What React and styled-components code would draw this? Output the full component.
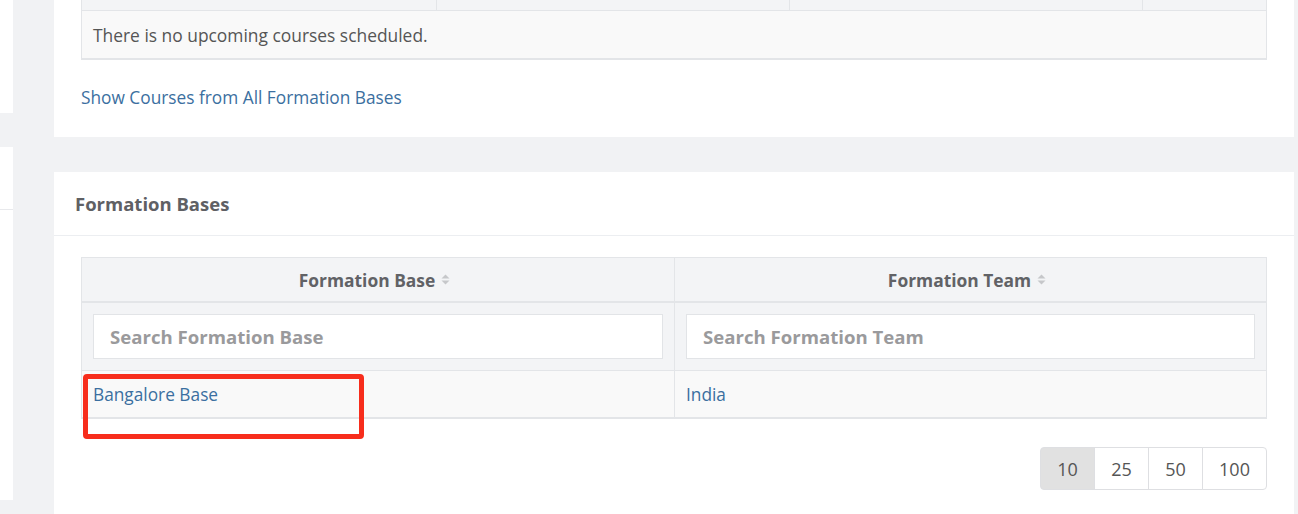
import React from 'react'
import styled, { createGlobalStyle } from 'styled-components'

const GlobalStyle = createGlobalStyle`
    html, body {
        margin: 0;
        padding: 0;
        background: #f1f2f4;
        font-family: "Open Sans", "Liberation Sans", sans-serif;
    }
`

const Page = styled.div`
    display: flex;
    height: 514px;
    overflow: hidden;
    background: #f1f2f4;
`

const Sidebar = styled.div`
    width: 13px;
    display: flex;
    flex-direction: column;
    gap: 34px;
`

const SideBlock = styled.div`
    background: #fff;
    height: ${props => props.h}px;
`

const SideItem = styled.div`
    height: 62px;
    border-bottom: 1px solid #e8e9ec;
`

const Main = styled.div`
    margin-left: 41px;
    width: 1240px;
    display: flex;
    flex-direction: column;
    gap: 35px;
`

const Card = styled.div`
    background: #fff;
    ${props => props.grow && 'flex: 1;'}
`

const CardBody = styled.div`
    padding: ${props => props.pad || '0 27px 28px'};
`

const CardHead = styled.div`
    height: 63px;
    display: flex;
    align-items: center;
    padding: 0 21px;
    border-bottom: 1px solid #eceef1;
    font-size: 18.5px;
    font-weight: 700;
    color: #5f6064;
`

const Grid = styled.div`
    display: grid;
    grid-template-columns: ${props => props.cols};
    border: 1px solid #e3e5e8;
    border-top: ${props => props.noTop ? 'none' : '1px solid #e3e5e8'};
    border-bottom-width: 2px;
`

const Cell = styled.div`
    position: relative;
    background: ${props => props.bg || '#f9f9f9'};
    border-left: ${props => props.first ? 'none' : '1px solid #e3e5e8'};
    border-bottom: ${props => props.bb || 'none'};
    height: ${props => props.h}px;
    padding: ${props => props.pad || '0 11px'};
    display: flex;
    align-items: center;
    justify-content: ${props => props.center ? 'center' : 'flex-start'};
    box-sizing: border-box;
    font-size: 17.4px;
    color: #555;
`

const Span = styled(Cell)`
    grid-column: 1 / -1;
`

const HeadText = styled.span`
    font-weight: 700;
    color: #616266;
    display: inline-flex;
    align-items: center;
    gap: 6px;
`

const Link = styled.a`
    color: #3b6fa0;
    font-size: 17.3px;
    text-decoration: none;
    cursor: pointer;
`

const ShowLink = styled(Link)`
    display: block;
    margin-top: 27px;
    line-height: 22px;
`

const Search = styled.input`
    width: 100%;
    height: 45px;
    box-sizing: border-box;
    border: 1px solid #e2e4e7;
    background: #fff;
    padding: 0 16px;
    font-family: inherit;
    font-size: 18.6px;
    font-weight: 700;
    outline: none;
    &::placeholder {
        color: #9a9a9c;
    }
`

const Highlight = styled.div`
    position: absolute;
    left: 1px;
    top: 3px;
    width: 281px;
    height: 65px;
    box-sizing: border-box;
    border: 5px solid #f72d1c;
    border-radius: 4px;
    z-index: 2;
`

const Pager = styled.div`
    display: flex;
    justify-content: flex-end;
    margin-top: 28px;
`

const PageBtn = styled.div`
    height: 43px;
    width: ${props => props.w}px;
    box-sizing: border-box;
    display: flex;
    align-items: center;
    justify-content: center;
    border: 1px solid #dedfe2;
    margin-left: -1px;
    font-size: 18px;
    color: #555;
    background: ${props => props.active ? '#e1e1e1' : '#fff'};
    &:first-child {
        border-radius: 4px 0 0 4px;
    }
    &:last-child {
        border-radius: 0 4px 4px 0;
    }
`

const SortIcon = () => (
    <svg width="9" height="13" viewBox="0 0 9 13">
        <path d="M0.5 5.5 L4.5 1.5 L8.5 5.5 Z" fill="#c6c7ca" />
        <path d="M0.5 7.5 L4.5 11.5 L8.5 7.5 Z" fill="#c6c7ca" />
    </svg>
)

const pages = [
    { n: '10', w: 55, active: true },
    { n: '25', w: 55 },
    { n: '50', w: 55 },
    { n: '100', w: 65 },
]

const App = () => (
    <>
        <GlobalStyle />
        <Page>
            <Sidebar>
                <SideBlock h={113} />
                <SideBlock h={353}><SideItem /></SideBlock>
            </Sidebar>
            <Main>
                <Card>
                    <CardBody>
                        <Grid cols="354px 353px 353px 1fr" noTop>
                            {[0, 1, 2, 3].map(i => (
                                <Cell key={i} first={i === 0} h={11} bg="#f3f4f6" bb="1px solid #e3e5e8" />
                            ))}
                            <Span first h={47} pad="0 11px">There is no upcoming courses scheduled.</Span>
                        </Grid>
                        <ShowLink>Show Courses from All Formation Bases</ShowLink>
                    </CardBody>
                </Card>
                <Card grow>
                    <CardHead>Formation Bases</CardHead>
                    <CardBody pad="21px 27px 0">
                        <Grid cols="1fr 1fr">
                            <Cell first center h={45} pad="0 18px 0 11px" bg="#f3f4f6" bb="2px solid #e3e5e8">
                                <HeadText>Formation Base <SortIcon /></HeadText>
                            </Cell>
                            <Cell center h={45} pad="0 18px 0 11px" bg="#f3f4f6" bb="2px solid #e3e5e8">
                                <HeadText>Formation Team <SortIcon /></HeadText>
                            </Cell>
                            <Cell first h={68} bg="#f3f4f6" bb="1px solid #e3e5e8">
                                <Search placeholder="Search Formation Base" />
                            </Cell>
                            <Cell h={68} bg="#f3f4f6" bb="1px solid #e3e5e8">
                                <Search placeholder="Search Formation Team" />
                            </Cell>
                            <Cell first h={46}>
                                <Link>Bangalore Base</Link>
                                <Highlight />
                            </Cell>
                            <Cell h={46}>
                                <Link>India</Link>
                            </Cell>
                        </Grid>
                        <Pager>
                            {pages.map(p => (
                                <PageBtn key={p.n} w={p.w} active={p.active}>{p.n}</PageBtn>
                            ))}
                        </Pager>
                    </CardBody>
                </Card>
            </Main>
        </Page>
    </>
)

export default App
